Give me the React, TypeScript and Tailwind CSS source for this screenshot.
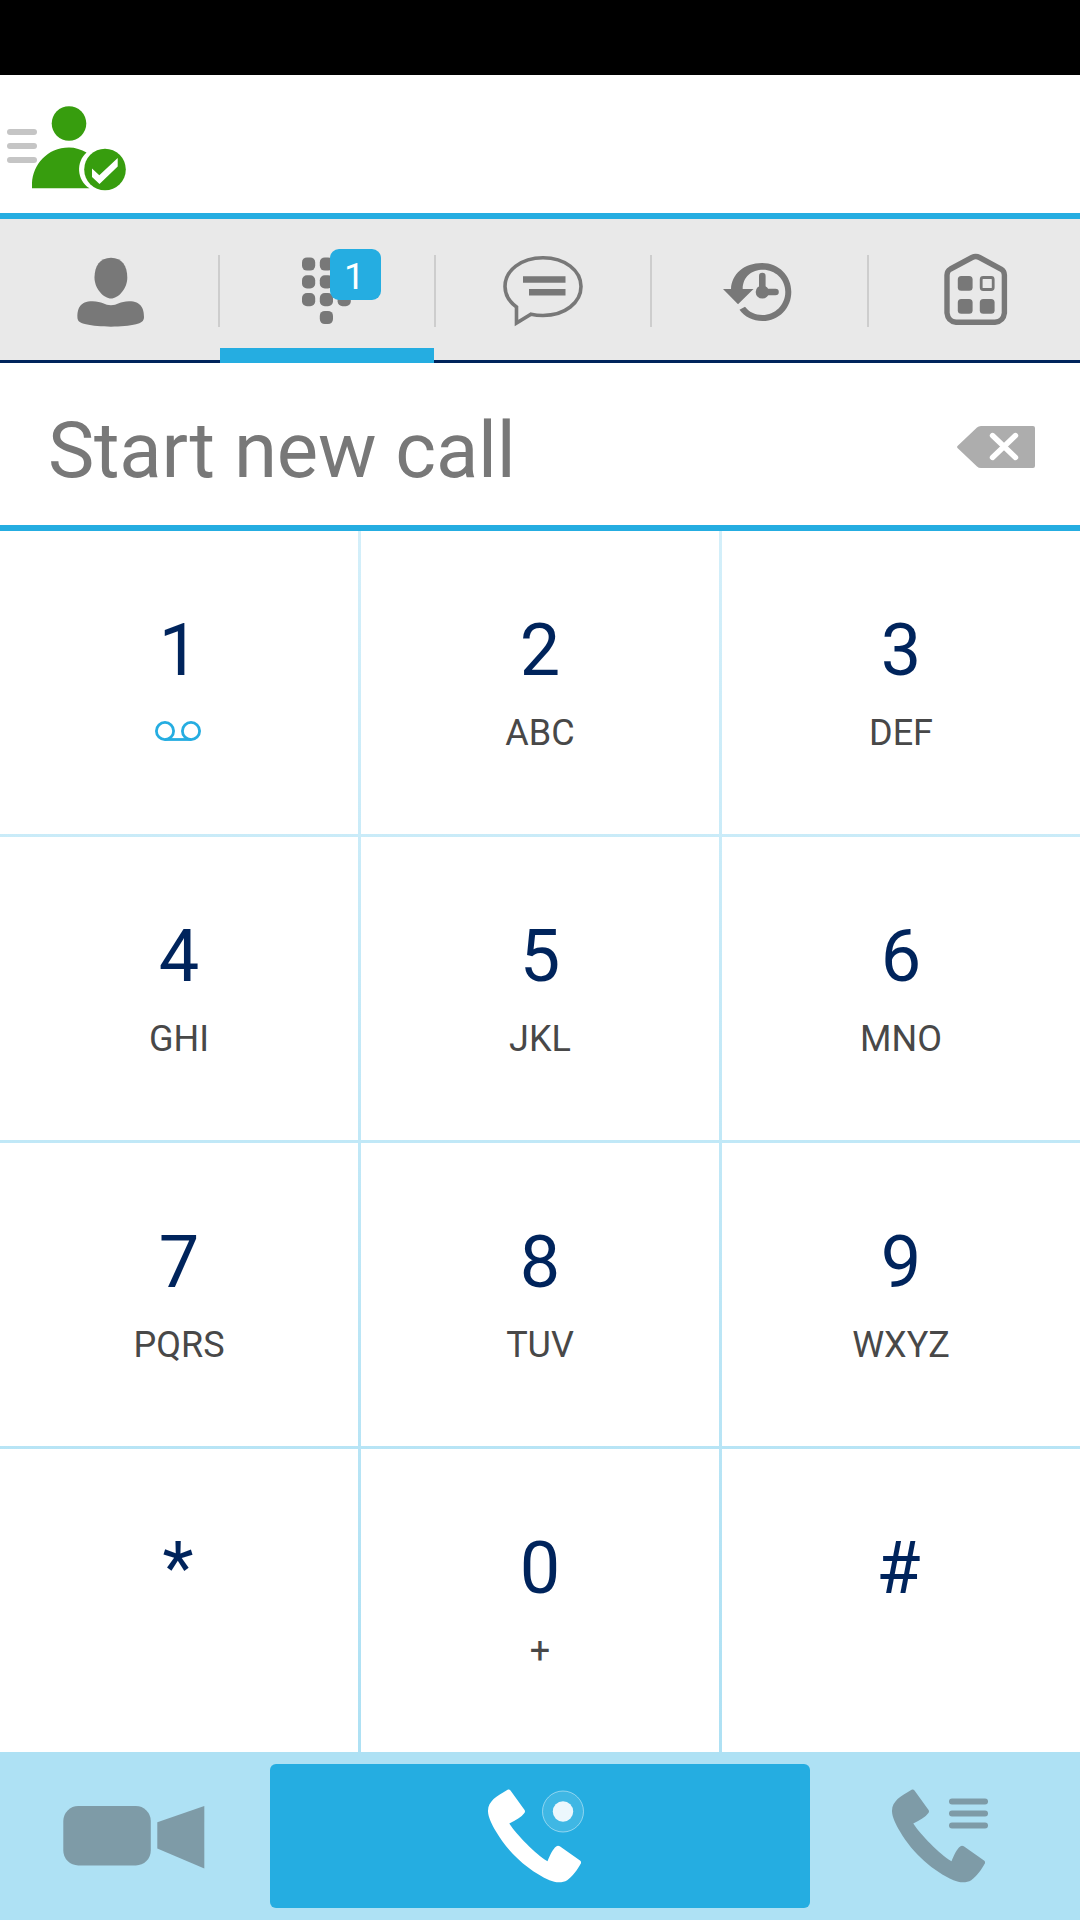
// App.tsx
// Softphone dialer screen: status header, tab bar, number entry, keypad and call actions

import React from "react";

interface DialKey {
  digit: string;
  letters?: string;
  voicemail?: boolean;
  // optical alignment for symbol keys
  nudge?: string;
}

const KEYS: DialKey[] = [
  { digit: "1", voicemail: true },
  { digit: "2", letters: "ABC" },
  { digit: "3", letters: "DEF" },
  { digit: "4", letters: "GHI" },
  { digit: "5", letters: "JKL" },
  { digit: "6", letters: "MNO" },
  { digit: "7", letters: "PQRS" },
  { digit: "8", letters: "TUV" },
  { digit: "9", letters: "WXYZ" },
  { digit: "*", nudge: "pr-[2px]" },
  { digit: "0", letters: "+" },
  { digit: "#", nudge: "pr-[5px]" },
];

const HANDSET_PATH =
  "M19.6 .8C20.6 .2 21.7 .4 22.5 1.4L36.4 20.8C37.2 21.9 37.2 23 36.4 24.1C33.4 28.2 28 31.3 21.3 34.4C29 46 47 64.500 59.500 72.200C62.300 65.500 64.800 60 68.200 57.400C69.400 56.500 70.600 56.500 71.800 57.300L92 71.600C93.100 72.400 93.400 73.500 92.700 74.800C90 80 84 88 79.200 91.200C74.500 94 67.500 93.800 61.500 91.200C42 82.500 21 65 8 42.500C3.500 35 .3 28 0 22.500C-.2 12.500 8 7.500 19.600 .8Z";

const MenuIcon = () => (
  <svg className="h-[36px] w-[30px]" viewBox="0 0 30 36" fill="#c5c5c5">
    <rect y="1" width="30" height="6" rx="3" />
    <rect y="15" width="30" height="6" rx="3" />
    <rect y="29" width="30" height="6" rx="3" />
  </svg>
);

const PresenceIcon = () => (
  <svg className="h-[86px] w-[94px]" viewBox="0 0 94 86" fill="#379d0e">
    <circle cx="37" cy="17.500" r="17.300" />
    <path d="M0 82.300V77C1 59 15 41.500 37 41.500C43 41.500 49.500 43.500 54.500 46.500C44 56 44.500 74 57.500 82.300Z" />
    <circle cx="73" cy="63.500" r="20.800" />
    <path d="M60 62.500L67.300 69.300L85.700 52V60.500L67.500 78L60 71Z" fill="#fff" />
  </svg>
);

const ContactsIcon = () => (
  <svg className="h-[70px] w-[68px]" viewBox="0 0 68 70" fill="#787878">
    <path d="M34 .7C45 .7 50.300 9 50.300 20.500C50.300 32 41 41.500 34 41.500C27 41.500 17.500 32 17.500 20.500C17.500 9 23 .7 34 .7Z" />
    <path d="M.4 60C.4 52 2.500 44.200 15.500 44.200C25 44.200 28 48.200 34 48.200C40 48.200 43 44.200 52 44.200C64.500 44.200 67 52 67 60C67 64.500 64 66 59 67.300C46 70.500 22 70.500 9 67.300C3 65.800 .4 64.500 .4 60Z" />
  </svg>
);

const DialpadIcon = () => (
  <svg className="h-[68px] w-[50px]" viewBox="0 0 50 68" fill="#787878">
    {[0.4, 18.2, 36].map((y) =>
      [0, 17.8, 35.6].map((x) => (
        <rect key={`${x}-${y}`} x={x} y={y} width="13.200" height="13.200" rx="5" />
      ))
    )}
    <rect x="17.800" y="53.900" width="13.200" height="13.200" rx="5" />
  </svg>
);

const ChatIcon = () => (
  <svg className="h-[72px] w-[80px]" viewBox="0 0 80 72" fill="none">
    <path
      d="M13.500 52C6 46.500 2 39.500 2 31.500C2 15.500 18 2.700 40 2.700C62 2.700 78 15.500 78 31.500C78 47.500 62 60.500 40 60.500C36 60.500 31.500 60 28 59.200L13.500 68Z"
      stroke="#787878"
      strokeWidth="3.600"
    />
    <path d="M20 24.500H62.500M26 37.200H62.500" stroke="#787878" strokeWidth="6.400" />
  </svg>
);

const HistoryIcon = () => (
  <svg className="h-[60px] w-[70px]" viewBox="0 0 70 60" fill="#787878">
    <path d="M0 26H8C8.500 11.500 21 .1 39 .1C56 .1 68.300 13 68.300 29C68.300 45 56 58.100 39.500 58.100C30 58.100 21.500 53.800 16.500 46.800L22 43.800C26 49 32 52 39.500 52C52 52 62.300 42 62.300 29C62.300 16 52 6.700 40 6.700C29 6.700 19.700 13.500 19.700 26H30.500L15 41.300Z" />
    <circle cx="39.300" cy="29" r="6.600" />
    <path d="M39.300 29V13M39.300 29H52.500" stroke="#787878" strokeWidth="6.600" strokeLinecap="round" />
  </svg>
);

const OfficeIcon = () => (
  <svg className="h-[73px] w-[64px]" viewBox="0 0 64 73" fill="none">
    <path
      d="M6.500 16L28 4.500Q31.700 2.500 35.500 4.500L57 16Q60.400 18 60.400 22V60Q59.400 68.500 51 69.200H12Q4 68.500 3 60V22Q3 18 6.500 16Z"
      stroke="#787878"
      strokeWidth="5.400"
    />
    <g fill="#787878">
      <rect x="13.800" y="23" width="14.800" height="14.800" rx="3.500" />
      <rect x="13.800" y="46" width="14.800" height="14.800" rx="3.500" />
      <rect x="35.800" y="46" width="14.800" height="14.800" rx="3.500" />
    </g>
    <rect x="37.200" y="24.500" width="12" height="12" rx="2" stroke="#787878" strokeWidth="2.800" />
  </svg>
);

const BackspaceIcon = () => (
  <svg className="h-[42px] w-[78px]" viewBox="0 0 78 42">
    <path d="M.5 20Q-.3 21 .5 22L20 40.500Q21.500 42 24 42H76Q78 42 78 40V2Q78 0 76 0H24Q21.500 0 20 1.500Z" fill="#adadad" />
    <path d="M35.500 9.500L58.500 31.500M58.500 9.500L35.500 31.500" stroke="#fff" strokeWidth="5.400" strokeLinecap="round" />
  </svg>
);

const VoicemailIcon = () => (
  <svg className="h-[20px] w-[46px]" viewBox="0 0 46 20" fill="none" stroke="#25ade1" strokeWidth="2.800">
    <circle cx="10" cy="10" r="8.600" />
    <circle cx="36" cy="10" r="8.600" />
    <path d="M10 18.500H36" />
  </svg>
);

const VideoIcon = () => (
  <svg className="h-[64px] w-[142px]" viewBox="0 0 142 64" fill="#7e9ba7">
    <rect x=".3" y=".1" width="87.500" height="59.400" rx="15" />
    <path d="M94.300 16.300L141.300 .1V62.600L94.300 42.500Z" />
  </svg>
);

const CallIcon = () => (
  <svg className="h-[94px] w-[97px]" viewBox="0 0 97 94">
    <path d={HANDSET_PATH} fill="#fff" />
    <circle cx="75" cy="22.500" r="20.500" fill="#fff" fillOpacity=".12" stroke="#fff" strokeOpacity=".45" />
    <circle cx="75" cy="22.500" r="10.200" fill="#ecf7fd" />
  </svg>
);

const CallOptionsIcon = () => (
  <svg className="h-[94px] w-[97px]" viewBox="0 0 97 94" fill="#7e9ba7">
    <path d={HANDSET_PATH} />
    <rect x="57" y="9.500" width="39" height="6" rx="3" />
    <rect x="57" y="21.500" width="39" height="6" rx="3" />
    <rect x="57" y="33.500" width="39" height="6" rx="3" />
  </svg>
);

const TabDivider = () => <div className="mt-9 h-[72px] w-[2px] shrink-0 bg-[#cdcdcd]" />;

const TabBar = () => (
  <nav className="flex h-[144px] shrink-0 bg-[#e9e9e9]">
    <div className="flex w-[218px] justify-center border-b-3 border-[#00245c] pt-[38px] pl-[3px]">
      <ContactsIcon />
    </div>
    <div className="flex border-b-3 border-[#00245c]">
      <TabDivider />
    </div>
    <div className="flex w-[214px] border-b-15 border-[#25ade1] pt-[38px] pl-[82px]">
      <div className="relative h-[68px] w-[50px]">
        <DialpadIcon />
        <span className="absolute -top-[8px] left-[28px] flex size-[51px] items-center justify-center rounded-[9px] bg-[#25ade1] pr-[2px] pt-[3px] text-[37px] leading-none text-white">
          1
        </span>
      </div>
    </div>
    <div className="flex flex-1 border-b-3 border-[#00245c]">
      <TabDivider />
      <div className="flex w-[214px] justify-center pt-[36px]">
        <ChatIcon />
      </div>
      <TabDivider />
      <div className="flex w-[215px] justify-center pt-[44px] pr-[3px]">
        <HistoryIcon />
      </div>
      <TabDivider />
      <div className="flex flex-1 justify-center pt-[34px] pl-[3px]">
        <OfficeIcon />
      </div>
    </div>
  </nav>
);

const KeypadKey: React.FC<DialKey> = ({ digit, letters, voicemail = false, nudge = "" }) => (
  <button className="flex flex-col items-center bg-white pt-[77px]">
    <span className={`text-[72px] leading-[85px] text-[#00245c] ${nudge}`}>{digit}</span>
    {voicemail && (
      <span className="mt-[28px] pr-[2px]">
        <VoicemailIcon />
      </span>
    )}
    {letters && <span className="mt-[19px] text-[36px] leading-[42px] text-[#484848]">{letters}</span>}
  </button>
);

export default function App() {
  return (
    <div className="flex h-[1920px] w-[1080px] flex-col overflow-hidden bg-white font-['Roboto',sans-serif]">
      <div className="h-[75px] shrink-0 bg-black" />

      {/* Presence header */}
      <header className="flex h-[144px] shrink-0 border-b-6 border-[#25ade1] pl-[7px]">
        <div className="pt-[53px]">
          <MenuIcon />
        </div>
        <div className="-ml-[5px] pt-[31px]">
          <PresenceIcon />
        </div>
      </header>

      <TabBar />

      {/* Number entry */}
      <div className="flex h-[168px] shrink-0 items-start justify-between border-b-6 border-[#25ade1] pr-[45px] pl-[48px]">
        <span className="pt-[40px] text-[78px] leading-[95px] tracking-[-0.25px] text-[#787878]">
          Start new call
        </span>
        <button className="mt-[63px]">
          <BackspaceIcon />
        </button>
      </div>

      {/* Keypad, the gradient shows through the gaps as grid lines */}
      <div className="grid h-[1221px] shrink-0 grid-cols-3 grid-rows-4 gap-[3px] bg-linear-to-b from-[#d3effa] to-[#aee1f4]">
        {KEYS.map((key) => (
          <KeypadKey key={key.digit} {...key} />
        ))}
      </div>

      {/* Call actions */}
      <footer className="flex h-[168px] shrink-0 bg-[#aee1f4] py-3">
        <button className="flex w-[270px] pt-[42px] pl-[63px]">
          <VideoIcon />
        </button>
        <button className="flex w-[540px] rounded-md bg-[#25ade1] pt-[25px] pl-[218px]">
          <CallIcon />
        </button>
        <button className="flex w-[270px] pt-[25px] pl-[82px]">
          <CallOptionsIcon />
        </button>
      </footer>
    </div>
  );
}
